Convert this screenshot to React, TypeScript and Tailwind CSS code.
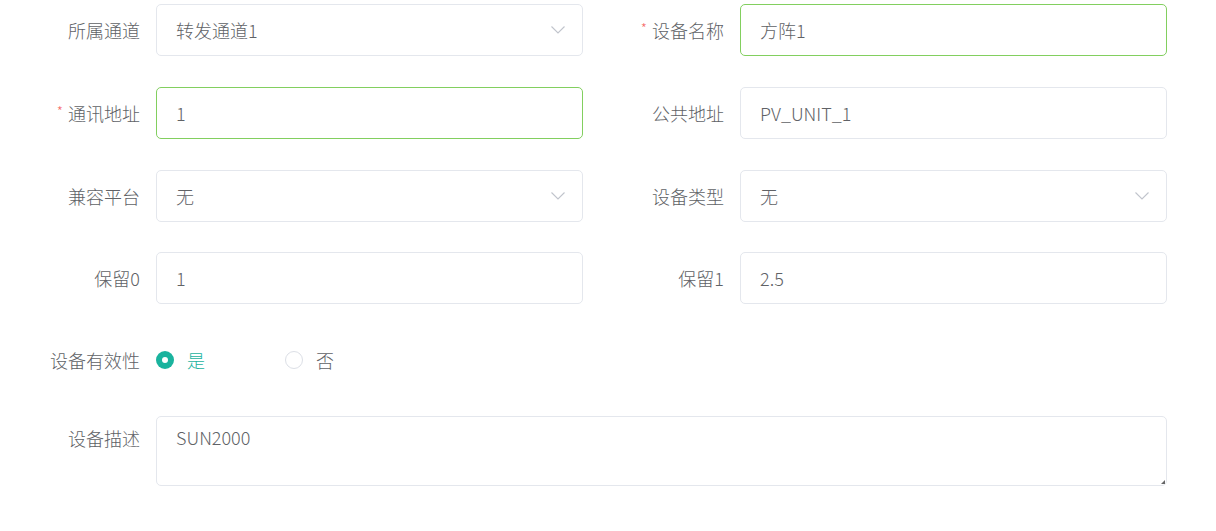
import React from "react";

const font = { fontFamily: '"Noto Sans CJK SC", "Noto Sans", sans-serif' };

function Chevron() {
  return (
    <svg width="14" height="8" viewBox="0 0 14 8" className="shrink-0">
      <path d="M0.5 0.5 L7 7 L13.5 0.5" fill="none" stroke="#c0c4cc" strokeWidth="1.1" />
    </svg>
  );
}

function Label({ text, required }: { text: string; required?: boolean }) {
  return (
    <div className="w-[156px] shrink-0 pr-[16px] flex items-center justify-end text-[18px] text-[#606266]">
      {required && <span className="text-[#f56c6c] text-[14px] mr-[5px] -mt-[4px]">*</span>}
      <span>{text}</span>
    </div>
  );
}

function Field({
  label,
  value,
  required,
  select,
  focus,
}: {
  label: string;
  value: string;
  required?: boolean;
  select?: boolean;
  focus?: boolean;
}) {
  return (
    <div className="flex h-[52px] w-[583px]">
      <Label text={label} required={required} />
      <div
        className={`flex-1 flex items-center justify-between rounded-[5px] border bg-white pl-[19px] pr-[17px] text-[18px] text-[#606266] ${
          focus ? "border-[#82cf5f]" : "border-[#e4e7ed]"
        }`}
      >
        <span>{value}</span>
        {select && <Chevron />}
      </div>
    </div>
  );
}

export default function App() {
  return (
    <div className="w-[1216px] h-[531px] bg-white overflow-hidden font-light" style={font}>
      <div className="pt-[4px] flex flex-col">
        <div className="flex gap-x-[1px]">
          <Field label="所属通道" value="转发通道1" select />
          <Field label="设备名称" value="方阵1" required focus />
        </div>
        <div className="flex gap-x-[1px] mt-[31px]">
          <Field label="通讯地址" value="1" required focus />
          <Field label="公共地址" value="PV_UNIT_1" />
        </div>
        <div className="flex gap-x-[1px] mt-[31px]">
          <Field label="兼容平台" value="无" select />
          <Field label="设备类型" value="无" select />
        </div>
        <div className="flex gap-x-[1px] mt-[30px]">
          <Field label="保留0" value="1" />
          <Field label="保留1" value="2.5" />
        </div>
        <div className="flex h-[52px] mt-[30px]">
          <Label text="设备有效性" />
          <div className="flex items-center">
            <div className="flex items-center w-[129px]">
              <span className="w-[18px] h-[18px] rounded-full bg-[#1ab39e] flex items-center justify-center">
                <span className="w-[6px] h-[6px] rounded-full bg-white" />
              </span>
              <span className="ml-[13px] text-[18px] text-[#1ab39e]">是</span>
            </div>
            <div className="flex items-center">
              <span className="w-[18px] h-[18px] rounded-full border border-[#dcdfe6] bg-white" />
              <span className="ml-[13px] text-[18px] text-[#606266]">否</span>
            </div>
          </div>
        </div>
        <div className="flex mt-[30px]">
          <div className="w-[156px] shrink-0 pr-[16px] pt-[9px] flex justify-end text-[18px] text-[#606266]">
            设备描述
          </div>
          <div className="relative w-[1011px] h-[70px] rounded-[5px] border border-[#e4e7ed] pl-[19px] pt-[7px] text-[18px] text-[#606266]">
            SUN2000
            <svg className="absolute right-[1px] bottom-[1px]" width="6" height="6" viewBox="0 0 6 6">
              <path d="M2 6 L6 6 L6 2 Z" fill="#666" />
            </svg>
          </div>
        </div>
      </div>
    </div>
  );
}
